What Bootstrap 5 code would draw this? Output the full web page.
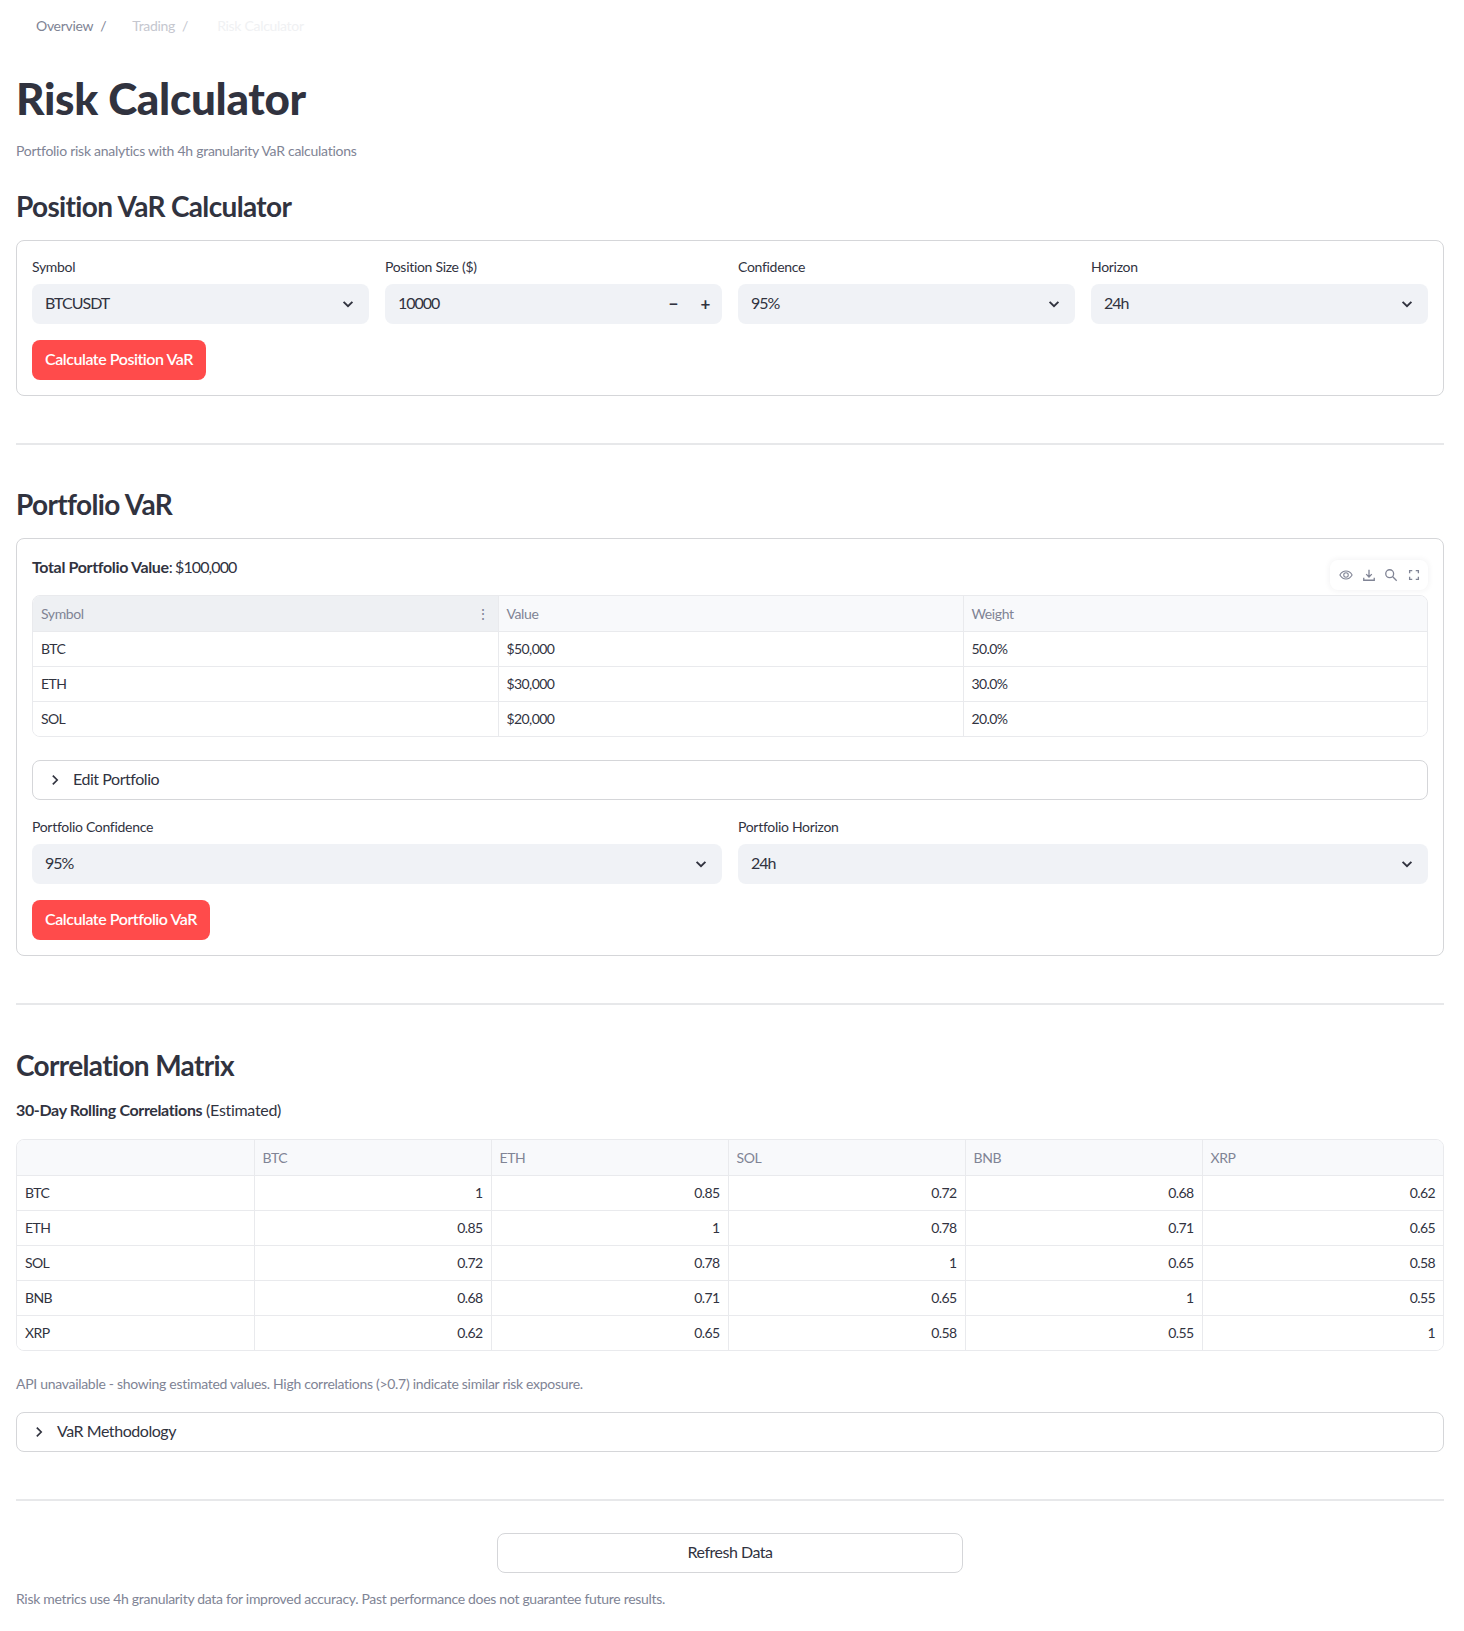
<!doctype html>
<html lang="en"><head><meta charset="utf-8"><title>Risk Calculator</title>
<link href="https://cdn.jsdelivr.net/npm/bootstrap@5.3.0/dist/css/bootstrap.min.css" rel="stylesheet">
<style>
body{font-family:"Lato","Noto Sans",sans-serif;color:#31333f;background:#fff;font-size:16px;line-height:1.6}
.pg{padding:0 20px 0 16px}
.crumbs{height:52px;padding-left:20px;font-size:14px;color:#808495;letter-spacing:-.3px}
.crumbs span{line-height:1}
.c1{color:#808495}.c2{color:#c5c7cf}.c3{color:#f0f1f3;margin-left:3px}
.sep{margin:0 26px 0 7px}
.ttl{font-size:44px;font-weight:900;line-height:52px;margin:20px 0 0;letter-spacing:-.3px}
.sub{font-size:14px;color:#808495;line-height:20px;margin:17px 0 0;letter-spacing:-.27px}
.hd{font-size:28px;font-weight:700;line-height:36px;margin:0;letter-spacing:-.65px}
.boxx{border:1px solid #d5d6d9;border-radius:8px;padding:16px 15px 15px;position:relative}
.fld{font-size:14px;line-height:20px;margin:0 0 7px;display:block;color:#31333f;letter-spacing:-.3px}
.fsel.form-select,.fnum{height:40px;background-color:#f0f2f6;border:0;border-radius:8px;font-size:16px;color:#31333f;padding:0 13px 2px;line-height:38px;box-shadow:none;letter-spacing:-1px}
.fsel.form-select{background-position:right 13px center;background-size:16px;background-image:url("data:image/svg+xml,%3csvg xmlns='http://www.w3.org/2000/svg' viewBox='0 0 16 16'%3e%3cpath fill='none' stroke='%2331333f' stroke-width='1.9' d='M3.6 5.8 8 10.2l4.4-4.4'/%3e%3c/svg%3e")}
.fnum{display:flex;align-items:center;justify-content:space-between;padding-right:1px;padding-bottom:0}
.fnum>span:first-child{margin-bottom:2px}
.pm{width:32px;text-align:center;font-weight:700;line-height:40px;font-size:17px}
.gbtn.btn{background:#ff4b4b;border:0;border-radius:8px;color:#fff;font-size:16px;font-weight:600;height:40px;padding:0 13px 2px;line-height:38px;letter-spacing:-.45px}
.rule{border:0;border-top:2px solid #e7e8ea;opacity:1;margin:0}
.dfw{border:1px solid #e9eaed;border-radius:8px;overflow:hidden}
.dft{table-layout:fixed;width:100%;margin:0;font-size:14px;border-collapse:collapse}
.dft th,.dft td{font-weight:400;height:35px;padding:0 8px;border-right:1px solid #e9eaed;border-bottom:1px solid #e9eaed;color:#31333f;line-height:20px;vertical-align:middle;background:#fff;letter-spacing:-.6px}
.dft th{background:#f8f9fb;color:#808495;letter-spacing:-.4px;padding-top:1px}
.dft tr>*:last-child{border-right:0}
.dft tbody tr:last-child>*{border-bottom:0}
.dft th.act{background:#eef0f3}
.w-p{width:465px}
.w-c{width:237px}
.expd{height:40px;border:1px solid #d5d6d9;border-radius:8px;display:flex;align-items:center;padding-left:15px;padding-bottom:2px;font-size:16px;letter-spacing:-.45px}
.expd svg{margin-right:11px;margin-top:2px}
.tools{position:absolute;right:15px;top:21px;width:98px;height:30px;background:#fff;border-radius:8px;box-shadow:0 0 6px rgba(49,51,63,.08);padding:0 7px 0 9px}
.cap{font-size:14px;color:#808495;line-height:20px;margin:0;letter-spacing:-.3px}
.rfr.btn{width:466px;height:40px;border:1px solid #d5d6d9;border-radius:8px;background:#fff;color:#31333f;font-size:16px;padding:0 0 2px;line-height:36px;letter-spacing:-.5px}
.m-a{margin-top:27px}.m-b{margin-top:47px}.m-c{margin-top:41px}.m-d{margin-top:42px}.m-e{margin-top:15px}.m-f{margin-top:23px}.m-g{margin-top:17px}.m-h{margin-top:32px}.m-i{margin-top:16px}.m-j{margin-top:23px}.m-k{margin-top:18px}
.rw{padding-top:1px}
.lbl-t{line-height:24px;letter-spacing:-.3px}
.amt{letter-spacing:-.9px}
.lbl-t strong{letter-spacing:-.35px}
</style></head><body>
<div class="pg">
<nav class="crumbs d-flex align-items-center"><span class="c1">Overview</span><span class="c1 sep">/</span><span class="c2">Trading</span><span class="c2 sep">/</span><span class="c3">Risk Calculator</span></nav>
<h1 class="ttl">Risk Calculator</h1>
<p class="sub">Portfolio risk analytics with 4h granularity VaR calculations</p>
<h2 class="hd m-a">Position VaR Calculator</h2>
<div class="boxx mt-3">
 <div class="row g-3">
  <div class="col-3"><label class="fld">Symbol</label><select class="form-select fsel"><option>BTCUSDT</option></select></div>
  <div class="col-3"><label class="fld">Position Size ($)</label><div class="fnum"><span>10000</span><span class="d-flex"><span class="pm">−</span><span class="pm">+</span></span></div></div>
  <div class="col-3"><label class="fld">Confidence</label><select class="form-select fsel"><option>95%</option></select></div>
  <div class="col-3"><label class="fld">Horizon</label><select class="form-select fsel"><option>24h</option></select></div>
 </div>
 <button class="btn gbtn mt-3" type="button">Calculate Position VaR</button>
</div>
<hr class="rule m-b">
<h2 class="hd m-c">Portfolio VaR</h2>
<div class="boxx mt-3">
 <div class="lbl-t"><strong class="fw-bold">Total Portfolio Value</strong><span class="amt">: $100,000</span></div>
 <div class="tools d-flex align-items-center justify-content-between">
  <svg width="14" height="14" viewBox="0 0 16 16" fill="none" stroke="#808495" stroke-width="1.2"><path d="M1 8s2.600-4.500 7-4.500S15 8 15 8s-2.600 4.500-7 4.500S1 8 1 8z"/><circle cx="8" cy="8" r="2.600"/></svg>
  <svg width="14" height="14" viewBox="0 0 16 16" fill="none" stroke="#808495" stroke-width="1.5"><path d="M8 2v8M4.800 7 8 10.300 11.200 7M2 11v3h12v-3"/></svg>
  <svg width="14" height="14" viewBox="0 0 16 16" fill="none" stroke="#808495" stroke-width="1.5"><circle cx="6.500" cy="6.500" r="4.500"/><path d="m10 10 4.500 4.500"/></svg>
  <svg width="14" height="14" viewBox="0 0 16 16" fill="none" stroke="#808495" stroke-width="1.5"><path d="M3 6V3h3M10 3h3v3M13 10v3h-3M6 13H3v-3"/></svg>
 </div>
 <div class="dfw mt-3">
  <table class="dft"><colgroup><col class="w-p"><col class="w-p"><col></colgroup><thead><tr><th class="act"><div class="d-flex justify-content-between"><span>Symbol</span><span>⋮</span></div></th><th>Value</th><th>Weight</th></tr></thead>
  <tbody><tr><td>BTC</td><td>$50,000</td><td>50.0%</td></tr><tr><td>ETH</td><td>$30,000</td><td>30.0%</td></tr><tr><td>SOL</td><td>$20,000</td><td>20.0%</td></tr></tbody></table>
 </div>
 <div class="expd m-f"><svg width="14" height="14" viewBox="0 0 16 16" fill="none" stroke="#31333f" stroke-width="1.900"><path d="m5.500 3 5 5-5 5"/></svg>Edit Portfolio</div>
 <div class="rw">
 <div class="row g-3 mt-0">
  <div class="col-6"><label class="fld">Portfolio Confidence</label><select class="form-select fsel"><option>95%</option></select></div>
  <div class="col-6"><label class="fld">Portfolio Horizon</label><select class="form-select fsel"><option>24h</option></select></div>
 </div>
 </div>
 <button class="btn gbtn mt-3" type="button">Calculate Portfolio VaR</button>
</div>
<hr class="rule m-b">
<h2 class="hd m-d">Correlation Matrix</h2>
<div class="m-e lbl-t"><strong class="fw-bold">30-Day Rolling Correlations</strong> (Estimated)</div>
<div class="dfw m-g">
 <table class="dft text-end"><colgroup><col class="w-c"><col class="w-c"><col class="w-c"><col class="w-c"><col class="w-c"><col></colgroup><thead><tr><th></th><th class="text-start">BTC</th><th class="text-start">ETH</th><th class="text-start">SOL</th><th class="text-start">BNB</th><th class="text-start">XRP</th></tr></thead>
 <tbody>
 <tr><td class="text-start">BTC</td><td>1</td><td>0.85</td><td>0.72</td><td>0.68</td><td>0.62</td></tr>
 <tr><td class="text-start">ETH</td><td>0.85</td><td>1</td><td>0.78</td><td>0.71</td><td>0.65</td></tr>
 <tr><td class="text-start">SOL</td><td>0.72</td><td>0.78</td><td>1</td><td>0.65</td><td>0.58</td></tr>
 <tr><td class="text-start">BNB</td><td>0.68</td><td>0.71</td><td>0.65</td><td>1</td><td>0.55</td></tr>
 <tr><td class="text-start">XRP</td><td>0.62</td><td>0.65</td><td>0.58</td><td>0.55</td><td>1</td></tr>
 </tbody></table>
</div>
<p class="cap m-j">API unavailable - showing estimated values. High correlations (&gt;0.7) indicate similar risk exposure.</p>
<div class="expd m-k">
<svg width="14" height="14" viewBox="0 0 16 16" fill="none" stroke="#31333f" stroke-width="1.900"><path d="m5.500 3 5 5-5 5"/></svg>VaR Methodology</div>
<hr class="rule m-b">
<div class="text-center m-h"><button class="btn rfr" type="button">Refresh Data</button></div>
<p class="cap m-i">Risk metrics use 4h granularity data for improved accuracy. Past performance does not guarantee future results.</p>
</div>
<script src="https://cdn.jsdelivr.net/npm/bootstrap@5.3.0/dist/js/bootstrap.bundle.min.js"></script>
</body></html>
